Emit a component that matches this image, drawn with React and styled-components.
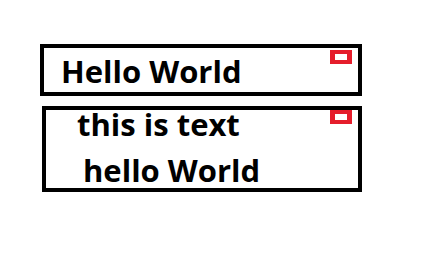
import React from "react";
import styled, { createGlobalStyle } from "styled-components";

const Global = createGlobalStyle`
  body {
    margin: 0;
    background: #fff;
    font-family: "Open Sans", "Liberation Sans", sans-serif;
  }
`;

const Page = styled.div`
  display: flex;
  flex-direction: column;
  gap: 10px;
  padding: 44px 0 0 40px;
`;

const Card = styled.div`
  box-sizing: border-box;
  display: flex;
  justify-content: space-between;
  align-items: flex-start;
  width: ${(p) => p.$width}px;
  height: ${(p) => p.$height}px;
  margin-left: ${(p) => p.$indent || 0}px;
  border: 4px solid #000;
  padding-right: 6px;
`;

const Lines = styled.div`
  display: flex;
  flex-direction: column;
  margin-top: ${(p) => p.$shift || 0}px;
`;

const Line = styled.div`
  font-size: 31px;
  font-weight: 700;
  color: #000;
  line-height: 46px;
  white-space: nowrap;
  padding-left: ${(p) => p.$pad}px;
`;

const Toggle = styled.div`
  box-sizing: border-box;
  width: 22px;
  height: 14px;
  margin-top: ${(p) => p.$top || 0}px;
  border: 4px solid #e51d2b;
  border-width: 4px 5px;
  flex-shrink: 0;
`;

const App = () => (
  <>
    <Global />
    <Page>
      <Card $width={322} $height={52}>
        <Lines>
          <Line $pad={17}>Hello World</Line>
        </Lines>
        <Toggle $top={2} />
      </Card>
      <Card $width={320} $height={86} $indent={2}>
        <Lines $shift={-9}>
          <Line $pad={31}>this is text</Line>
          <Line $pad={37}>hello World</Line>
        </Lines>
        <Toggle />
      </Card>
    </Page>
  </>
);

export default App;
